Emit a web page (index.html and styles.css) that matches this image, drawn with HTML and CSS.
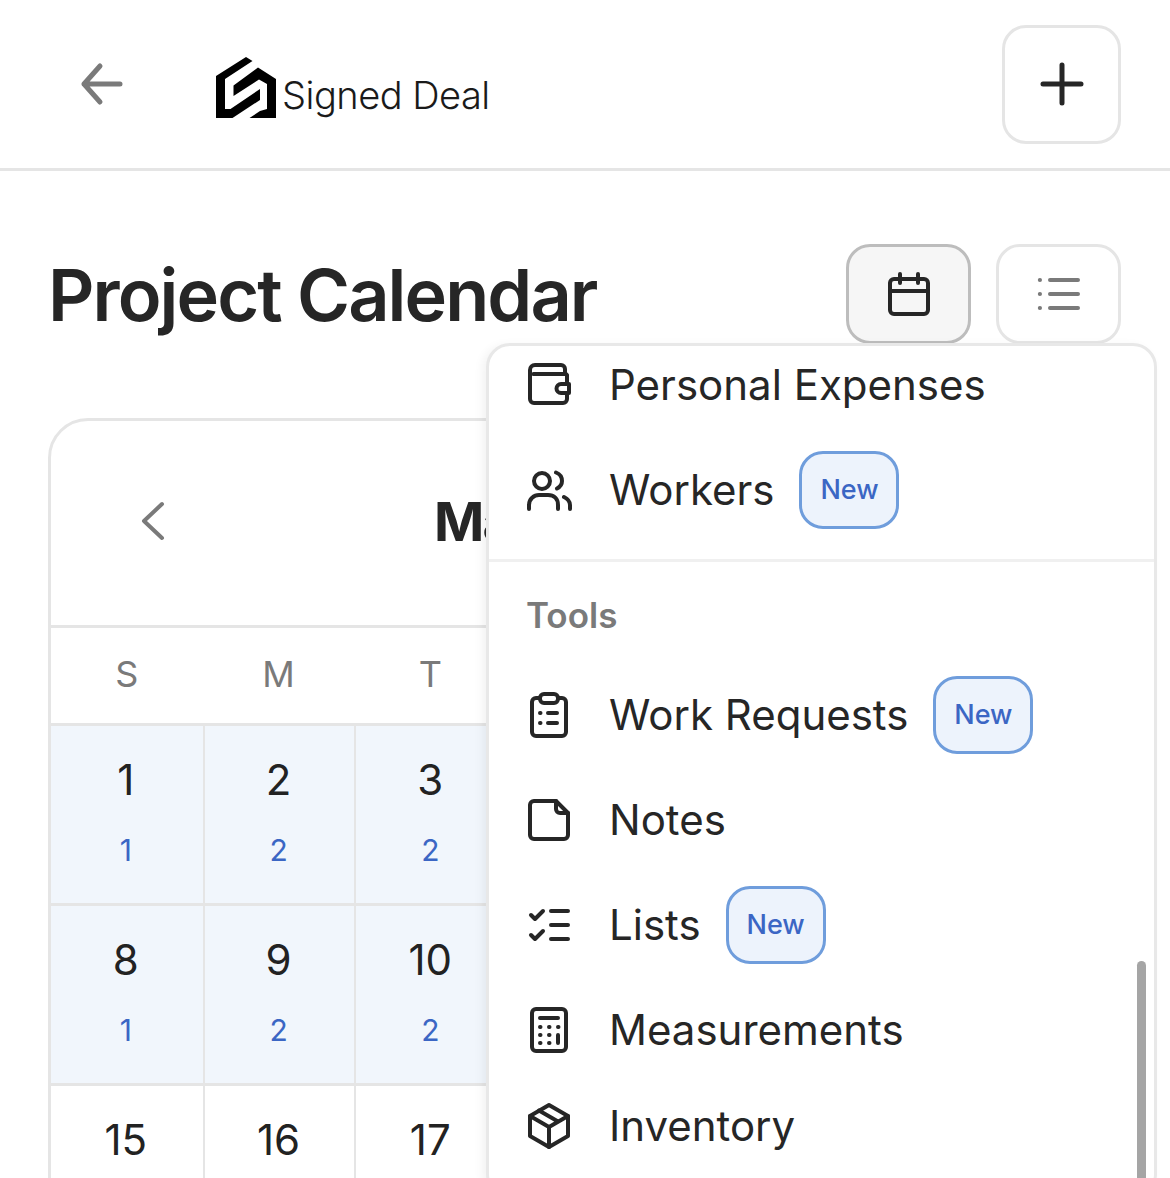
FILE: index.html
```html
<!DOCTYPE html>
<html lang="en">

<head>
    <meta charset="UTF-8">
    <meta name="viewport" content="width=device-width, initial-scale=1.0">
    <title>Project Calendar</title>
    <link rel="stylesheet" href="styles.css">
</head>

<body>
    <div class="page">
        <header class="topbar">
            <a class="back-link" aria-label="Back">
                <svg viewBox="0 0 44 44" width="44" height="44" class="icon-gray icon-bold">
                    <path d="M40 22H4M4 22L20 4M4 22L20 40" />
                </svg>
            </a>
            <div class="logo">
                <svg class="logo-mark" viewBox="0 0 60 61" width="60" height="61">
                    <path d="M30 0L36.500 4L9 22V52H14.500L44 32V43L16.500 61H0V19Z" />
                    <path d="M42 10.500L60 22V61H33.500L44 54L51 52V27L43 22.500L17.500 39V28.500Z" />
                </svg>
                <span class="logo-text">Signed Deal</span>
            </div>
            <button class="add-btn" aria-label="Add">
                <svg viewBox="0 0 44 44" width="44" height="44" class="icon-bold">
                    <path d="M22 3V41M3 22H41" />
                </svg>
            </button>
        </header>

        <section class="title-row">
            <h1>Project Calendar</h1>
            <div class="view-switch">
                <button class="view-btn active" aria-label="Calendar view">
                    <svg viewBox="0 0 44 44" width="44" height="44">
                        <rect x="3" y="7" width="38" height="35" rx="4" />
                        <path d="M3 19H41M13 2V11M31 2V11" />
                    </svg>
                </button>
                <button class="view-btn" aria-label="List view">
                    <svg viewBox="0 0 44 44" width="44" height="44" class="icon-gray">
                        <path d="M13 8H41M13 22H41M13 36H41" />
                        <path d="M2.800 8H3M2.800 22H3M2.800 36H3" />
                    </svg>
                </button>
            </div>
        </section>

        <section class="calendar">
            <div class="calendar-head">
                <svg viewBox="0 0 24 40" width="24" height="40" class="icon-gray">
                    <path d="M21 3L3 20L21 37" />
                </svg>
                <h2>March 2026</h2>
                <svg viewBox="0 0 24 40" width="24" height="40" class="icon-gray">
                    <path d="M3 3L21 20L3 37" />
                </svg>
            </div>
            <div class="weekdays">
                <span>S</span><span>M</span><span>T</span>
            </div>
            <div class="days">
                <div class="day busy"><b>1</b><i>1</i></div>
                <div class="day busy"><b>2</b><i>2</i></div>
                <div class="day busy"><b>3</b><i>2</i></div>
                <div class="day"></div><div class="day"></div><div class="day"></div><div class="day"></div>
                <div class="day busy"><b>8</b><i>1</i></div>
                <div class="day busy"><b>9</b><i>2</i></div>
                <div class="day busy"><b>10</b><i>2</i></div>
                <div class="day"></div><div class="day"></div><div class="day"></div><div class="day"></div>
                <div class="day"><b>15</b></div>
                <div class="day"><b>16</b></div>
                <div class="day"><b>17</b></div>
            </div>
        </section>

        <aside class="menu">
            <div class="menu-scroll">
                <ul class="menu-list first">
                    <li>
                        <svg viewBox="0 0 48 48" width="48" height="48">
                            <path d="M40 13V8a4 4 0 0 0-4-4H10a5 5 0 0 0-5 5V38a4 4 0 0 0 4 4H38a4 4 0 0 0 4-4V14a2 2 0 0 0-2-1H8.500" />
                            <path d="M44 23H36a4.500 4.500 0 0 0 0 9H44Z" fill="#fff" />
                        </svg>
                        <span>Personal Expenses</span>
                    </li>
                    <li>
                        <svg viewBox="0 0 48 48" width="48" height="48">
                            <circle cx="17" cy="15" r="8" />
                            <path d="M4 43V39C4 33 9 29 14 29H23C29 29 33 33 33 39V43" />
                            <path d="M31 6.500C35 8 37 11 37 15C37 18.500 35 21 32 22.500M39 31C43 33 45 36 45 39V43" />
                        </svg>
                        <span>Workers</span>
                        <em class="badge">New</em>
                    </li>
                </ul>
                <h3>Tools</h3>
                <ul class="menu-list">
                    <li>
                        <svg viewBox="0 0 48 48" width="48" height="48">
                            <path d="M14 7H11a4 4 0 0 0-4 4V41a4 4 0 0 0 4 4H37a4 4 0 0 0 4-4V11a4 4 0 0 0-4-4H34" />
                            <rect x="15" y="3" width="18" height="9" rx="4" />
                            <path d="M23 22H32M23 32H32M15 22H15.500M15 32H15.500" />
                        </svg>
                        <span>Work Requests</span>
                        <em class="badge">New</em>
                    </li>
                    <li>
                        <svg viewBox="0 0 48 48" width="48" height="48">
                            <path d="M9 5H31L43 17V39a4 4 0 0 1-4 4H9a4 4 0 0 1-4-4V9a4 4 0 0 1 4-4Z" />
                            <path d="M31 5V13a4 4 0 0 0 4 4H43" />
                        </svg>
                        <span>Notes</span>
                    </li>
                    <li>
                        <svg viewBox="0 0 48 48" width="48" height="48">
                            <path d="M26 10H43M26 24H43M26 38H43" />
                            <path d="M6 14L10 18L18 10M6 34L10 38L18 30" />
                        </svg>
                        <span>Lists</span>
                        <em class="badge">New</em>
                    </li>
                    <li>
                        <svg viewBox="0 0 48 48" width="48" height="48">
                            <rect x="7" y="3" width="34" height="42" rx="4" />
                            <path d="M15 12H33M15 21H15.500M24 21H24.500M33 21H33.500M15 29H15.500M24 29H24.500M15 37H15.500M24 37H24.500M33 29V37" />
                        </svg>
                        <span>Measurements</span>
                    </li>
                    <li>
                        <svg viewBox="0 0 48 48" width="48" height="48">
                            <path d="M24 3L43 14V34L24 45L5 34V14Z" />
                            <path d="M5 14L24 25L43 14M24 25V45M14 8.500L33 19.500" />
                        </svg>
                        <span>Inventory</span>
                    </li>
                </ul>
            </div>
            <div class="scroll-thumb"></div>
        </aside>
    </div>
</body>

</html>
```

FILE: styles.css
```css
* {
    margin: 0;
    padding: 0;
    box-sizing: border-box;
}

html,
body {
    height: 100%;
    overflow: hidden;
    background: #fff;
}

body {
    font-family: "Inter", sans-serif;
    color: #262626;
}

svg {
    display: block;
    flex-shrink: 0;
    fill: none;
    stroke: #262626;
    stroke-width: 4;
    stroke-linecap: round;
    stroke-linejoin: round;
}

svg.icon-gray {
    stroke: #7a7a7a;
}

svg.icon-bold {
    stroke-width: 5;
}

button {
    background: #fff;
    font: inherit;
}

.page {
    position: relative;
    height: 1178px;
    overflow: hidden;
}

/* top bar */
.topbar {
    display: flex;
    align-items: center;
    height: 171px;
    padding: 0 49px 0 80px;
    border-bottom: 3px solid #e5e5e5;
}

.back-link {
    display: block;
}

.logo {
    display: flex;
    align-items: flex-end;
    margin-left: 92px;
    margin-top: 7px;
}

svg.logo-mark {
    fill: #000;
    stroke: none;
}

.logo-text {
    margin-left: 6px;
    font-size: 38px;
    font-weight: 300;
    letter-spacing: -0.5px;
    color: #1a1a1a;
}

.add-btn {
    display: flex;
    align-items: center;
    justify-content: center;
    width: 119px;
    height: 119px;
    margin-left: auto;
    border: 3px solid #e5e5e5;
    border-radius: 24px;
}

/* title */
.title-row {
    display: flex;
    align-items: flex-start;
    justify-content: space-between;
    padding: 73px 49px 0 48px;
}

h1 {
    padding-top: 1px;
    font-size: 72px;
    font-weight: 600;
    letter-spacing: -1.9px;
    line-height: 100px;
}

.view-switch {
    display: flex;
    gap: 25px;
}

.view-btn {
    display: flex;
    align-items: center;
    justify-content: center;
    width: 125px;
    height: 100px;
    border: 3px solid #e5e5e5;
    border-radius: 24px;
}

.view-btn.active {
    background: #f6f6f6;
    border-color: #bdbdbd;
}

/* calendar */
.calendar {
    width: 1068px;
    margin: 73px 0 0 48px;
    border: 3px solid #e5e5e5;
    border-radius: 40px 40px 0 0;
}

.calendar-head {
    display: flex;
    align-items: center;
    justify-content: space-between;
    height: 207px;
    padding: 0 84px 4px 90px;
    border-bottom: 3px solid #e5e5e5;
}

h2 {
    font-size: 54px;
    font-weight: 700;
    letter-spacing: -1.8px;
}

.weekdays {
    display: grid;
    grid-template-columns: repeat(7, 1fr);
    align-items: center;
    height: 95px;
    padding-bottom: 3px;
    font-size: 36px;
    color: #7a7a7a;
    text-align: center;
}

.days {
    display: grid;
    grid-template-columns: repeat(7, 1fr);
}

.day {
    display: flex;
    flex-direction: column;
    align-items: center;
    height: 180px;
    padding: 28px 2px 0 0;
    border-top: 3px solid #e5e5e5;
    border-left: 2px solid #e5e5e5;
}

.day:nth-child(7n + 1) {
    border-left: 0;
}

.day.busy {
    background: #f1f6fc;
}

.day b {
    font-size: 42px;
    font-weight: 400;
    line-height: 52px;
    color: #222;
}

.day i {
    margin-top: 25px;
    font-size: 30px;
    font-style: normal;
    line-height: 38px;
    color: #3b66c4;
}

/* dropdown menu */
.menu {
    position: absolute;
    top: 343px;
    left: 486px;
    right: 13px;
    bottom: -20px;
    background: #fff;
    border: 3px solid #e8e8e8;
    border-radius: 24px;
    box-shadow: -4px 2px 10px rgba(0, 0, 0, 0.05);
    overflow: hidden;
}

.menu-list {
    list-style: none;
}

.menu-list.first {
    margin-top: -14px;
    padding-bottom: 17px;
    border-bottom: 3px solid #f0f0f0;
}

.menu-list li {
    display: flex;
    align-items: center;
    height: 105px;
    padding-left: 36px;
}

.menu-list li:last-child {
    height: 87px;
}

.menu-list.first li:last-child {
    height: 105px;
}

.menu-list li span {
    margin-left: 36px;
    font-size: 42px;
}

.badge {
    display: flex;
    align-items: center;
    justify-content: center;
    width: 100px;
    height: 78px;
    margin-left: 25px;
    font-size: 27px;
    font-style: normal;
    font-weight: 500;
    color: #3b66c4;
    background: #edf3fc;
    border: 3px solid #6f9ddc;
    border-radius: 24px;
}

h3 {
    padding: 32px 0 26px 37px;
    font-size: 35px;
    font-weight: 600;
    line-height: 42px;
    color: #7a7a7a;
}

.scroll-thumb {
    position: absolute;
    top: 615px;
    right: 8px;
    bottom: 0;
    width: 9px;
    background: #a5a5a5;
    border-radius: 5px;
}
```
